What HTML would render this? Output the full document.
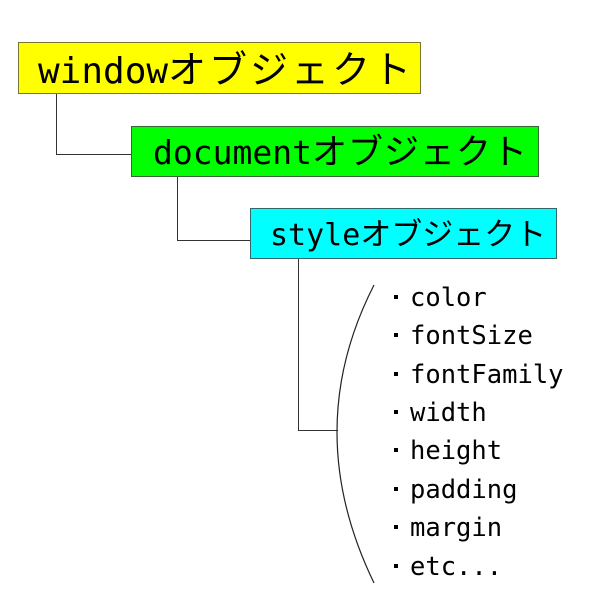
<!DOCTYPE html>
<html><head><meta charset="utf-8"><style>
body{margin:0;width:600px;height:600px;background:#fff;position:relative;overflow:hidden;font-family:"DejaVu Sans Mono","Noto Sans CJK JP",monospace;color:#000}
.b{position:absolute;box-sizing:border-box;border:1px solid #666;white-space:nowrap}
.t{position:absolute;white-space:nowrap;line-height:1}
.k{font-family:"Noto Sans CJK JP",sans-serif}
.l{position:absolute;background:#333}
.i{position:absolute;left:410px;font-size:25.5px;line-height:1;white-space:nowrap}
.i:before{content:"";position:absolute;left:-16px;top:9px;width:4px;height:4px;background:#000}
</style></head><body>
<div class="b" style="left:18px;top:42px;width:403px;height:52px;background:#ff0;border-color:#777733"></div>
<div class="t" style="left:38px;top:48px;font-size:36px">window<span class="k" style="font-size:38px;letter-spacing:3px">オブジェクト</span></div>
<div class="b" style="left:131px;top:126px;width:408px;height:51px;background:#0f0;border-color:#336633"></div>
<div class="t" style="left:153px;top:132px;font-size:33px">document<span class="k" style="font-size:35px;letter-spacing:1px">オブジェクト</span></div>
<div class="b" style="left:250px;top:208px;width:307px;height:51px;background:#0ff;border-color:#336666"></div>
<div class="t" style="left:270px;top:216px;font-size:30px">style<span class="k" style="font-size:31px;letter-spacing:0px">オブジェクト</span></div>
<div class="l" style="left:56px;top:94px;width:1px;height:60px"></div>
<div class="l" style="left:56px;top:154px;width:75px;height:1px"></div>
<div class="l" style="left:177px;top:177px;width:1px;height:63px"></div>
<div class="l" style="left:177px;top:240px;width:73px;height:1px"></div>
<div class="l" style="left:298px;top:259px;width:1px;height:171px"></div>
<div class="l" style="left:298px;top:430px;width:40px;height:1px"></div>
<svg style="position:absolute;left:0;top:0" width="600" height="600"><path d="M374 285 Q300 430 374 583" fill="none" stroke="#222" stroke-width="1.2"/></svg>
<div class="i" style="top:286px">color</div>
<div class="i" style="top:324px">fontSize</div>
<div class="i" style="top:363px">fontFamily</div>
<div class="i" style="top:401px">width</div>
<div class="i" style="top:439px">height</div>
<div class="i" style="top:478px">padding</div>
<div class="i" style="top:516px">margin</div>
<div class="i" style="top:555px">etc...</div>
</body></html>
